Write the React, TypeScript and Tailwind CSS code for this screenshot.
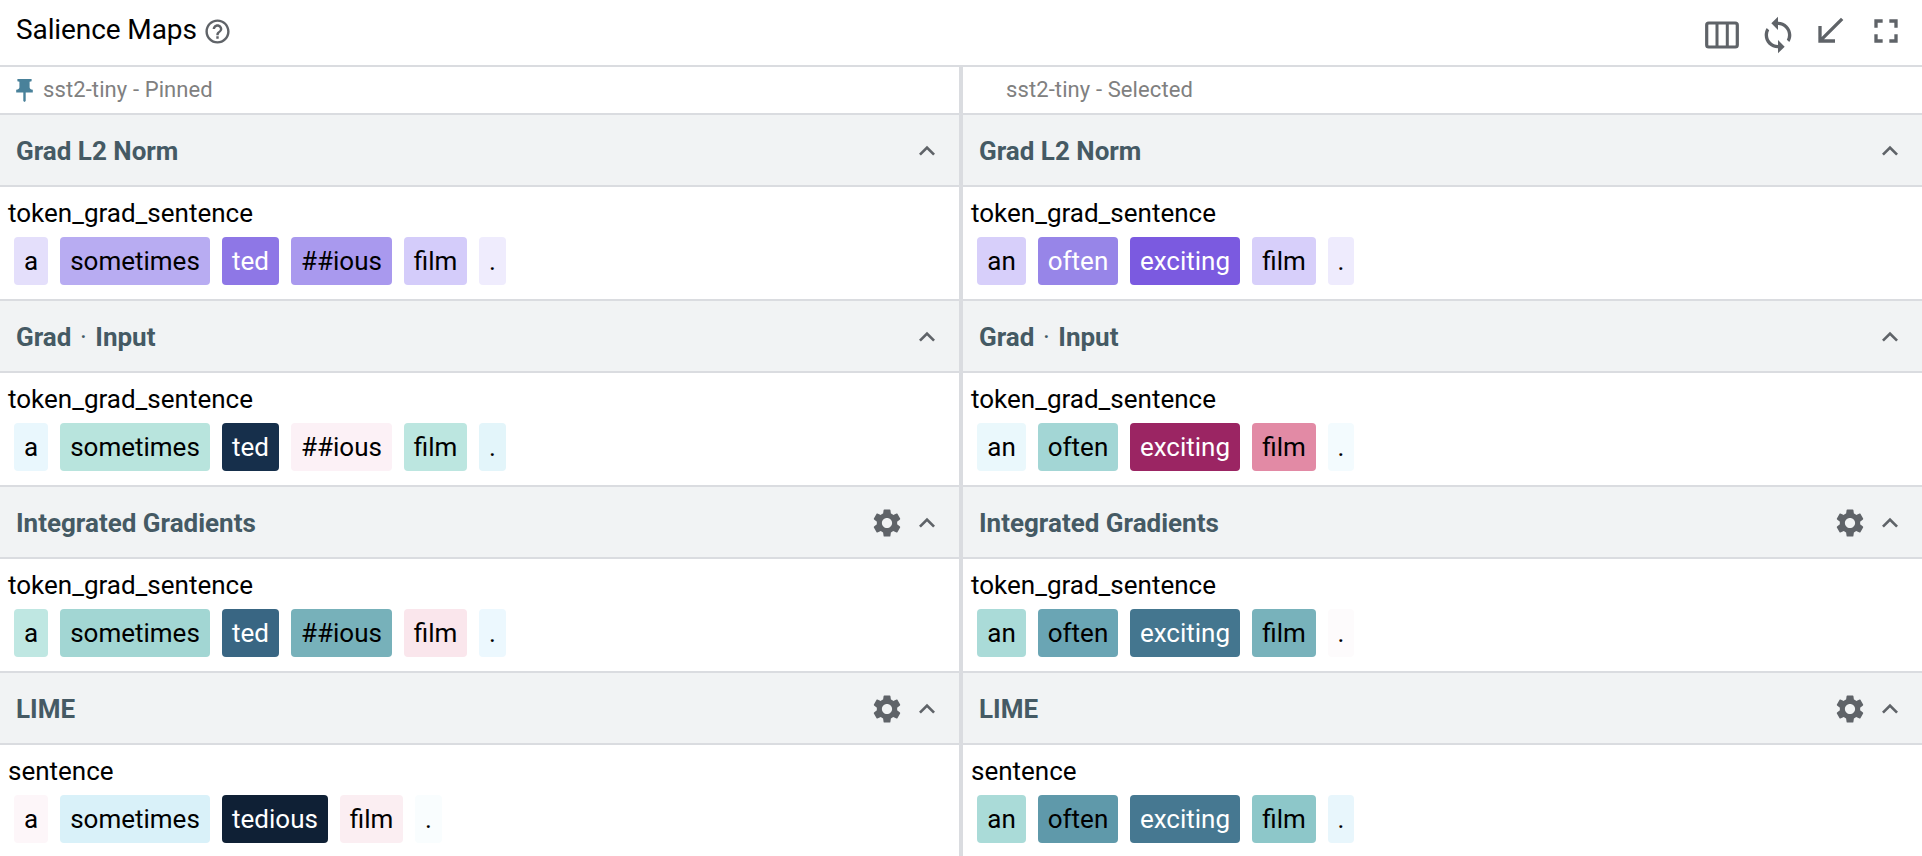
import React from "react";

type Token = { text: string; box: string };
type Section = { title: string; field: string; settings?: boolean; tokens: Token[] };

const pinned: Section[] = [
  {
    title: "Grad L2 Norm",
    field: "token_grad_sentence",
    tokens: [
      { text: "a", box: "w-[34px] bg-[#e4dffb]" },
      { text: "sometimes", box: "w-[150px] bg-[#b8acf2]" },
      { text: "ted", box: "w-[57px] bg-[#8e77e6] text-white" },
      { text: "##ious", box: "w-[101px] bg-[#a999ee]" },
      { text: "film", box: "w-[63px] bg-[#d4ccfa]" },
      { text: ".", box: "w-[27px] bg-[#efecfd]" },
    ],
  },
  {
    title: "Grad · Input",
    field: "token_grad_sentence",
    tokens: [
      { text: "a", box: "w-[34px] bg-[#e9f7fd]" },
      { text: "sometimes", box: "w-[150px] bg-[#b8e4dd]" },
      { text: "ted", box: "w-[57px] bg-[#162f4b] text-white" },
      { text: "##ious", box: "w-[101px] bg-[#fcf1f6]" },
      { text: "film", box: "w-[63px] bg-[#bce6e0]" },
      { text: ".", box: "w-[27px] bg-[#e3f5fa]" },
    ],
  },
  {
    title: "Integrated Gradients",
    field: "token_grad_sentence",
    settings: true,
    tokens: [
      { text: "a", box: "w-[34px] bg-[#bfe7e2]" },
      { text: "sometimes", box: "w-[150px] bg-[#a2d6d3]" },
      { text: "ted", box: "w-[57px] bg-[#396683] text-white" },
      { text: "##ious", box: "w-[101px] bg-[#77b1ba]" },
      { text: "film", box: "w-[63px] bg-[#fae6ec]" },
      { text: ".", box: "w-[27px] bg-[#ecf8fe]" },
    ],
  },
  {
    title: "LIME",
    field: "sentence",
    settings: true,
    tokens: [
      { text: "a", box: "w-[34px] bg-[#fdf6f9]" },
      { text: "sometimes", box: "w-[150px] bg-[#d9f1f9]" },
      { text: "tedious", box: "w-[106px] bg-[#0f2035] text-white" },
      { text: "film", box: "w-[63px] bg-[#fbeef2]" },
      { text: ".", box: "w-[27px] bg-[#f9fdfe]" },
    ],
  },
];

const selected: Section[] = [
  {
    title: "Grad L2 Norm",
    field: "token_grad_sentence",
    tokens: [
      { text: "an", box: "w-[49px] bg-[#d7cffa]" },
      { text: "often", box: "w-[80px] bg-[#9785e8] text-white" },
      { text: "exciting", box: "w-[110px] bg-[#7b5ae0] text-white" },
      { text: "film", box: "w-[64px] bg-[#d7cffa]" },
      { text: ".", box: "w-[26px] bg-[#eeebfd]" },
    ],
  },
  {
    title: "Grad · Input",
    field: "token_grad_sentence",
    tokens: [
      { text: "an", box: "w-[49px] bg-[#eaf8fc]" },
      { text: "often", box: "w-[80px] bg-[#a3d6d5]" },
      { text: "exciting", box: "w-[110px] bg-[#9b2563] text-white" },
      { text: "film", box: "w-[64px] bg-[#e28aa5]" },
      { text: ".", box: "w-[26px] bg-[#f3fbfe]" },
    ],
  },
  {
    title: "Integrated Gradients",
    field: "token_grad_sentence",
    settings: true,
    tokens: [
      { text: "an", box: "w-[49px] bg-[#aadbd8]" },
      { text: "often", box: "w-[80px] bg-[#6aa5b4]" },
      { text: "exciting", box: "w-[110px] bg-[#44768f] text-white" },
      { text: "film", box: "w-[64px] bg-[#78b2bb]" },
      { text: ".", box: "w-[26px] bg-[#fdfbfc]" },
    ],
  },
  {
    title: "LIME",
    field: "sentence",
    settings: true,
    tokens: [
      { text: "an", box: "w-[49px] bg-[#aadbd8]" },
      { text: "often", box: "w-[80px] bg-[#5f99aa]" },
      { text: "exciting", box: "w-[110px] bg-[#467891] text-white" },
      { text: "film", box: "w-[64px] bg-[#8dc7c9]" },
      { text: ".", box: "w-[26px] bg-[#e8f6fc]" },
    ],
  },
];

function Icon({ d, className }: { d: string; className: string }) {
  return (
    <svg viewBox="0 0 24 24" fill="currentColor" className={`shrink-0 ${className}`}>
      <path d={d} />
    </svg>
  );
}

const HELP =
  "M11 18h2v-2h-2v2zm1-16C6.48 2 2 6.48 2 12s4.48 10 10 10 10-4.48 10-10S17.52 2 12 2zm0 18c-4.41 0-8-3.59-8-8s3.59-8 8-8 8 3.59 8 8-3.59 8-8 8zm0-14c-2.21 0-4 1.79-4 4h2c0-1.1.9-2 2-2s2 .9 2 2c0 2-3 1.75-3 5h2c0-2.25 3-2.5 3-5 0-2.21-1.79-4-4-4z";
const SYNC =
  "M12 4V1L8 5l4 4V6c3.31 0 6 2.69 6 6 0 1.01-.25 1.97-.7 2.8l1.46 1.46C19.54 15.03 20 13.57 20 12c0-4.42-3.58-8-8-8zm0 14c-3.31 0-6-2.69-6-6 0-1.01.25-1.97.7-2.8L5.24 7.74C4.46 8.97 4 10.43 4 12c0 4.42 3.58 8 8 8v3l4-4-4-4v3z";
const ARROW = "M20 5.41 18.59 4 7 15.59V9H5v10h10v-2H8.41z";
const FULLSCREEN =
  "M7 14H5v5h5v-2H7v-3zm-2-4h2V7h3V5H5v5zm12 7h-3v2h5v-5h-2v3zM14 5v2h3v3h2V5h-5z";
const GEAR =
  "M19.14 12.94c.04-.3.06-.61.06-.94 0-.32-.02-.64-.07-.94l2.03-1.58c.18-.14.23-.41.12-.61l-1.92-3.32c-.12-.22-.37-.29-.59-.22l-2.39.96c-.5-.38-1.03-.7-1.62-.94l-.36-2.54c-.04-.24-.24-.41-.48-.41h-3.84c-.24 0-.43.17-.47.41l-.36 2.54c-.59.24-1.13.57-1.62.94l-2.39-.96c-.22-.08-.47 0-.59.22L2.74 8.87c-.12.21-.08.47.12.61l2.03 1.58c-.05.3-.09.63-.09.94s.02.64.07.94l-2.03 1.58c-.18.14-.23.41-.12.61l1.92 3.32c.12.22.37.29.59.22l2.39-.96c.5.38 1.03.7 1.62.94l.36 2.54c.05.24.24.41.48.41h3.84c.24 0 .44-.17.47-.41l.36-2.54c.59-.24 1.13-.56 1.62-.94l2.39.96c.22.08.47 0 .59-.22l1.92-3.32c.12-.22.07-.47-.12-.61l-2.01-1.58zM12 15.6c-1.98 0-3.6-1.62-3.6-3.6s1.62-3.6 3.6-3.6 3.6 1.62 3.6 3.6-1.62 3.6-3.6 3.6z";
const CHEVRON = "M12 8l-6 6 1.41 1.41L12 10.83l4.59 4.58L18 14z";

function Title({ text }: { text: string }) {
  const parts = text.split("·");
  return (
    <h2 className="grow text-[26px] leading-8 font-bold whitespace-pre text-[#455a64]">
      {parts[0]}
      {parts.length > 1 && (
        <>
          <span className="inline-block w-[11px] text-center font-normal">·</span>
          {parts[1]}
        </>
      )}
    </h2>
  );
}

function SectionView({ section, last }: { section: Section; last: boolean }) {
  return (
    <section>
      <header className="flex h-18 items-center border-b-2 border-[#dadce0] bg-[#f1f3f4] pt-0.5 pr-4 pl-4 text-[#5f6368]">
        <Title text={section.title} />
        {section.settings && <Icon d={GEAR} className="mr-[7px] size-[34px]" />}
        <Icon d={CHEVRON} className="size-8" />
      </header>
      <div className={`pt-[10px] pl-2 ${last ? "" : "h-[114px] border-b-2 border-[#dadce0]"}`}>
        <div className="h-10 text-[26px] leading-[32px]">{section.field}</div>
        <div className="flex gap-3 pl-1.5">
          {section.tokens.map((t, i) => (
            <span
              key={i}
              className={`flex h-12 items-center justify-center rounded-[4px] text-[26px] ${t.box}`}
            >
              {t.text}
            </span>
          ))}
        </div>
      </div>
    </section>
  );
}

function Column({ label, isPinned, sections }: { label: string; isPinned?: boolean; sections: Section[] }) {
  return (
    <div className="min-w-0 grow basis-0">
      <div className="flex h-12 items-center border-b-2 border-[#dadce0] pl-4">
        <div className="flex w-[27px] shrink-0 text-[#49819a]">
          {isPinned && (
            <svg viewBox="0 0 17 23" fill="currentColor" className="h-[23px] w-[17px]">
              <path d="M1.4 0h14.2v2.2l-2 .6v5.4c0 1.3 1.3 2.3 3.2 2.6v2.6H9.7V22l-1.2 1-1.2-1v-8.6H.2v-2.6c1.9-.3 3.2-1.3 3.2-2.6V2.8l-2-.6z" />
            </svg>
          )}
        </div>
        <span className="pb-0.5 text-[22px] tracking-[0.1px] text-[#808080]">{label}</span>
      </div>
      {sections.map((s, i) => (
        <SectionView key={s.title} section={s} last={i === sections.length - 1} />
      ))}
    </div>
  );
}

export default function App() {
  return (
    <div className="flex h-[856px] w-full flex-col overflow-hidden bg-white font-['Roboto',sans-serif] text-black">
      <header className="flex h-[67px] shrink-0 items-start border-b-2 border-[#dadce0] pr-4 pl-4 text-[#5f6368]">
        <h1 className="mt-3 w-[187px] text-[28px] leading-9 tracking-[-0.1px] whitespace-nowrap text-black">
          Salience Maps
        </h1>
        <Icon d={HELP} className="mt-[17px] size-[29px]" />
        <div className="ml-auto flex items-start">
          <svg viewBox="0 0 34 28" className="mt-[21px] h-7 w-[34px]" fill="none" stroke="currentColor">
            <rect x="1.7" y="2" width="30.6" height="24" rx="2" strokeWidth="3.2" />
            <path d="M12 2v24M22.3 2v24" strokeWidth="3" />
          </svg>
          <Icon d={SYNC} className="mt-[15px] ml-[19px] size-10" />
          <Icon d={ARROW} className="mt-[11px] ml-3 size-10" />
          <Icon d={FULLSCREEN} className="mt-[11px] ml-4 size-10" />
        </div>
      </header>
      <main className="flex min-h-0 grow">
        <Column label="sst2-tiny - Pinned" isPinned sections={pinned} />
        <div className="w-1 shrink-0 bg-[#dadce0]" />
        <Column label="sst2-tiny - Selected" sections={selected} />
      </main>
    </div>
  );
}
